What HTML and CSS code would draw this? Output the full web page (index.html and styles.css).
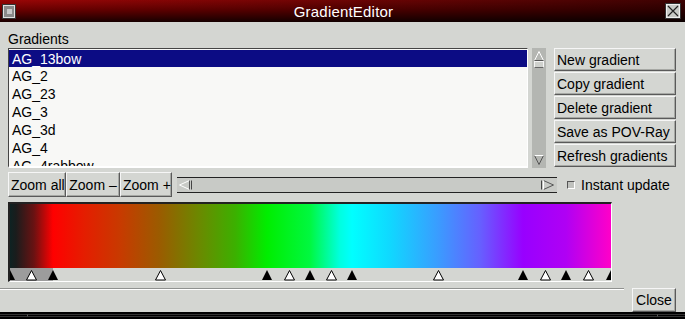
FILE: index.html
```html
<!DOCTYPE html>
<html lang="en">
<head>
  <meta charset="UTF-8" />
  <title>GradientEditor</title>
  <link rel="stylesheet" href="styles.css">
</head>
<body>
  <div class="window">
    <div class="titlebar">
      <span class="tb-icon"><span></span></span>
      <span class="title">GradientEditor</span>
      <span class="tb-close">
        <svg width="12" height="12" viewBox="0 0 12 12"><path d="M1 1 L11 11 M11 1 L1 11" stroke="#222" stroke-width="1.2" fill="none"/></svg>
      </span>
    </div>

    <div class="main">
      <div class="top">
        <div class="list-col">
          <div class="label">Gradients</div>
          <div class="list-row">
            <ul class="list">
              <li class="selected">AG_13bow</li>
              <li>AG_2</li>
              <li>AG_23</li>
              <li>AG_3</li>
              <li>AG_3d</li>
              <li>AG_4</li>
              <li>AG_4rabbow</li>
            </ul>
            <div class="vscroll">
              <svg width="14" height="120" viewBox="0 0 14 120">
                <polyline points="2.5,12.5 7,3.5 11.5,12.5" fill="none" stroke="#fff" />
                <line x1="2.5" y1="12.5" x2="11.5" y2="12.5" stroke="#555" />
                <rect x="2.5" y="13.5" width="9" height="6" fill="#cfd1cd" stroke="#f4f4f4" />
                <line x1="2.5" y1="19.5" x2="11.5" y2="19.5" stroke="#666" />
                <polyline points="2.5,107.5 7,116.5 11.5,107.5" fill="none" stroke="#555" />
                <line x1="2.5" y1="107.5" x2="11.5" y2="107.5" stroke="#fff" />
              </svg>
            </div>
          </div>
        </div>
        <div class="actions">
          <button class="btn">New gradient</button>
          <button class="btn">Copy gradient</button>
          <button class="btn">Delete gradient</button>
          <button class="btn">Save as POV-Ray</button>
          <button class="btn">Refresh gradients</button>
        </div>
      </div>

      <div class="toolbar">
        <div class="zoom-group">
          <button class="btn zoom-all">Zoom all</button>
          <button class="btn zoom-out">Zoom &ndash;</button>
          <button class="btn zoom-in">Zoom +</button>
        </div>
        <div class="hscroll">
          <svg width="380" height="14" viewBox="0 0 380 14">
            <polyline points="12.5,2.5 2.5,7 12.5,11.5" fill="none" stroke="#fff" />
            <line x1="12.5" y1="2.5" x2="12.5" y2="11.5" stroke="#555" />
            <line x1="14.5" y1="2.5" x2="14.5" y2="11.5" stroke="#444" />
            <polyline points="366.5,2.5 376.5,7 366.5,11.5" fill="none" stroke="#555" />
            <line x1="366.5" y1="2.5" x2="366.5" y2="11.5" stroke="#fff" />
            <line x1="364.5" y1="2.5" x2="364.5" y2="11.5" stroke="#444" />
          </svg>
        </div>
        <label class="check"><span class="box"></span>Instant update</label>
      </div>

      <div class="gradient">
        <div class="colors"></div>
        <svg class="markers" width="601" height="13" viewBox="0 0 601 13">
          <rect x="0" y="0" width="43" height="13" fill="#9c9c9c" />
          <g fill="#000">
            <polygon points="-5,12 0,2 5,12" />
            <polygon points="38,12 43,2 48,12" />
            <polygon points="252,12 257,2 262,12" />
            <polygon points="295,12 300,2 305,12" />
            <polygon points="337,12 342,2 347,12" />
            <polygon points="508,12 513,2 518,12" />
            <polygon points="551,12 556,2 561,12" />
            <polygon points="596,12 601,2 606,12" />
          </g>
          <g fill="#fff" stroke="#000" stroke-width="1">
            <polygon points="16.5,12 21.5,2.5 26.5,12" />
            <polygon points="145.5,12 150.5,2.5 155.5,12" />
            <polygon points="274.5,12 279.5,2.5 284.5,12" />
            <polygon points="316.5,12 321.5,2.5 326.5,12" />
            <polygon points="423.5,12 428.5,2.5 433.5,12" />
            <polygon points="530.5,12 535.5,2.5 540.5,12" />
            <polygon points="573.5,12 578.5,2.5 583.5,12" />
          </g>
        </svg>
      </div>
    </div>

    <div class="footer">
      <div class="separator"></div>
      <button class="btn close">Close</button>
    </div>
    <div class="frame-bottom">
      <span class="seg seg-left"></span>
      <span class="seg seg-mid"></span>
      <span class="seg seg-right"></span>
    </div>
  </div>
</body>
</html>
```

FILE: styles.css
```css
/* X11 style gradient editor window */
body {
  margin: 0;
  background: #d4d6d2;
  font-family: 'Liberation Sans', Arial, sans-serif;
  font-size: 14px;
  color: #000;
}

.window {
  width: 685px;
  height: 319px;
  background: #d4d6d2;
  display: flex;
  flex-direction: column;
  overflow: hidden;
}

/* title bar */
.titlebar {
  height: 22px;
  display: flex;
  align-items: center;
  padding: 0 5px 0 3px;
  background:
    linear-gradient(to right, rgba(0,0,0,0) 0%, rgba(0,0,0,0.35) 60%, rgba(0,0,0,0.6) 100%),
    linear-gradient(to bottom, #9a0606 0%, #6a0000 45%, #1a0000 100%);
}

.tb-icon {
  width: 10px;
  height: 11px;
  border: 1px solid #e0e0e0;
  outline: 1px solid #333;
  background: #8a8a8a;
  display: flex;
  align-items: center;
  justify-content: center;
}

.tb-icon span {
  width: 5px;
  height: 5px;
  background: #c8c8c8;
}

.title {
  flex: 1;
  text-align: center;
  color: #fff;
  font-size: 15px;
  letter-spacing: 0.2px;
  padding-left: 6px;
}

.tb-close {
  width: 12px;
  height: 12px;
  background: #c8cac6;
  border: 1px solid #eee;
  outline: 1px solid #333;
  display: flex;
}

/* main area */
.main {
  padding: 9px 0 0 8px;
}

.top {
  display: flex;
  align-items: flex-start;
}

.label {
  height: 17px;
  line-height: 17px;
}

.list-row {
  display: flex;
  gap: 4px;
}

.list {
  list-style: none;
  margin: 0;
  padding: 1px 0 0 0;
  width: 518px;
  height: 116px;
  overflow: hidden;
  background: #f8f8f6;
  border: 1px solid;
  border-bottom-width: 2px;
  border-color: #444 #fff #fff #444;
}

.list li {
  height: 18px;
  line-height: 19px;
  padding-left: 3px;
  white-space: nowrap;
}

.list li.selected {
  height: 17px;
  line-height: 18px;
  background: #0c0c84;
  color: #fff;
}

.vscroll {
  width: 14px;
  height: 120px;
  background: #b4b6b2;
  box-sizing: border-box;
}

.vscroll svg {
  display: block;
}

.actions {
  display: flex;
  flex-direction: column;
  gap: 1px;
  margin-top: 17px;
  margin-left: 8px;
  width: 122px;
}

.btn {
  font-family: 'Liberation Sans', Arial, sans-serif;
  font-size: 14px;
  color: #000;
  background: #d4d6d2;
  border: 1px solid;
  border-color: #f6f6f6 #5a5a5a #5a5a5a #f6f6f6;
  box-shadow: inset -1px -1px 0 #a6a8a4;
  margin: 0;
  padding: 0 2px;
  text-align: left;
  white-space: nowrap;
}

.actions .btn {
  height: 23px;
}

/* toolbar */
.toolbar {
  display: flex;
  align-items: center;
  margin-top: 4px;
  height: 25px;
}

.zoom-group {
  display: flex;
}

.zoom-group .btn {
  height: 25px;
  text-align: center;
}

.zoom-all { width: 58px; }
.zoom-out { width: 54px; }
.zoom-in { width: 52px; }

.hscroll {
  margin-left: 5px;
  width: 380px;
  height: 14px;
  background: #c8cac6;
  box-sizing: border-box;
}

.hscroll svg {
  display: block;
  border-top: 1px solid #222;
  border-bottom: 1px solid #222;
  margin-top: -1px;
}

.check {
  display: flex;
  align-items: center;
  margin-left: 10px;
}

.check .box {
  width: 6px;
  height: 6px;
  background: #c0c2be;
  border: 1px solid;
  border-color: #555 #fff #fff #555;
  margin-right: 6px;
}

/* gradient preview */
.gradient {
  margin-top: 5px;
  width: 601px;
  border-top: 2px solid #222;
  border-left: 2px solid #222;
  border-right: 1px solid #fff;
  border-bottom: 1px solid #fff;
}

.colors {
  height: 64px;
  background: linear-gradient(to right,
    #0e2222 0px,
    #1a1c1c 6px,
    #6a1212 24px,
    #ff0000 43px,
    #e41e00 75px,
    #c83a00 110px,
    #9a5c00 150px,
    #6a8a00 190px,
    #3cb000 225px,
    #00ee00 257px,
    #00f840 300px,
    #00ffe0 330px,
    #00ffff 342px,
    #10d8ff 380px,
    #3a9cff 428px,
    #6660ff 470px,
    #9800ff 513px,
    #b000f4 556px,
    #ff00c8 601px);
}

.markers {
  display: block;
}

/* footer */
.footer {
  display: flex;
  align-items: flex-start;
  margin-top: 6px;
  height: 24px;
}

.separator {
  width: 624px;
  border-top: 1px solid #909290;
  border-bottom: 1px solid #fff;
}

.close {
  margin-left: 8px;
  width: 44px;
  height: 24px;
  text-align: center;
}

.frame-bottom {
  height: 7px;
  display: flex;
  background: #000;
}

.seg {
  border-top: 1px solid #333;
  border-bottom: 1px solid #333;
  margin: 2px 0;
}

.seg-left { width: 27px; border-right: 1px solid #555; }
.seg-mid { flex: 1; border-right: 1px solid #555; }
.seg-right { width: 27px; }
```
